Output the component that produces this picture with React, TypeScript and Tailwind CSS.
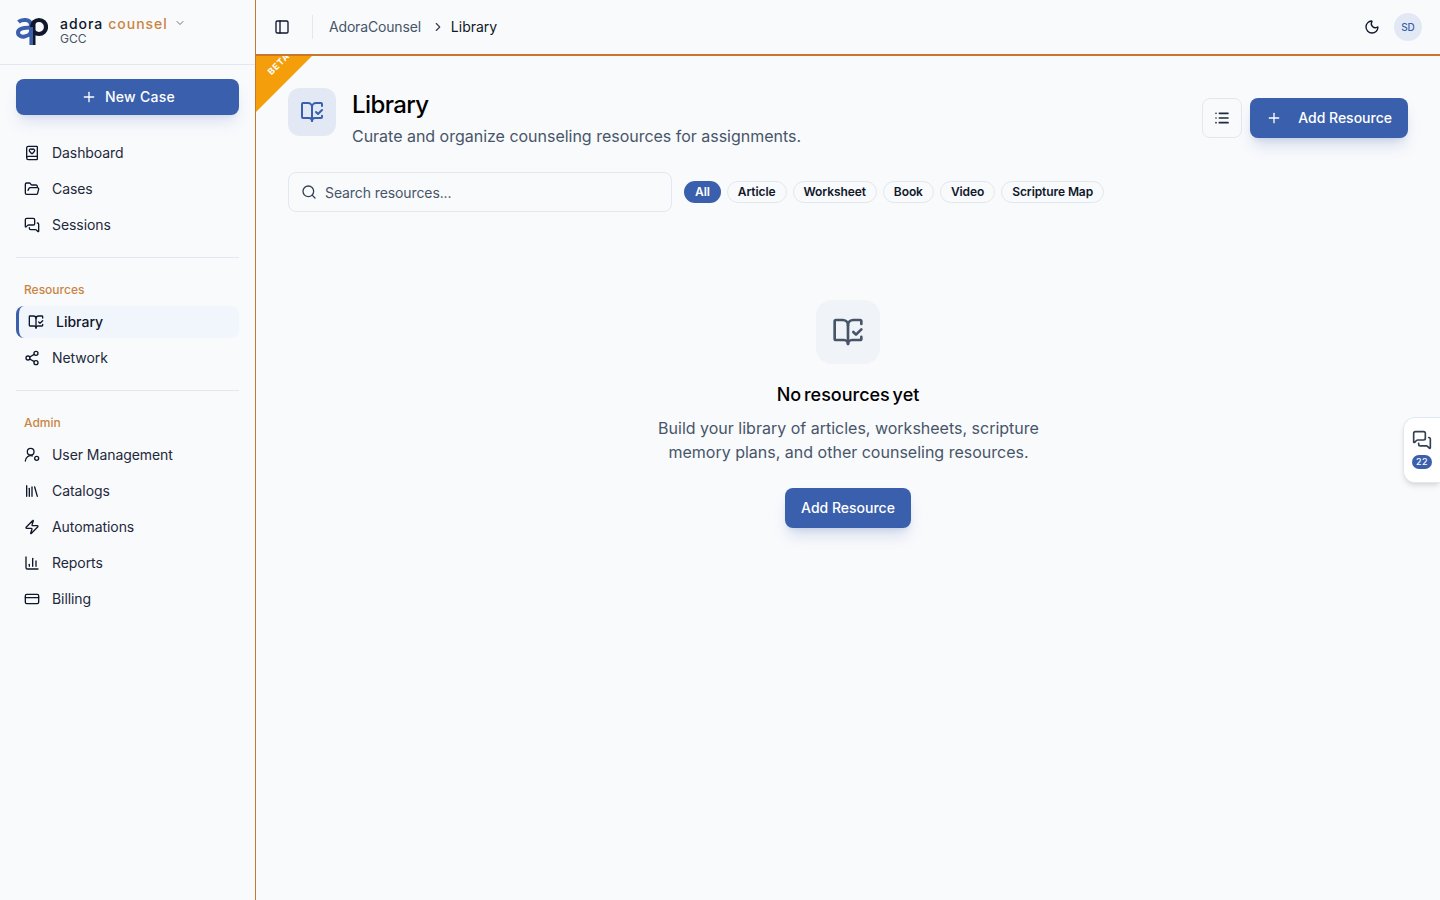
import {
  BookHeart,
  BookOpenCheck,
  ChartColumn,
  ChevronDown,
  ChevronRight,
  CreditCard,
  FolderOpen,
  Library,
  List,
  MessagesSquare,
  Moon,
  PanelLeft,
  Plus,
  Search,
  Share2,
  Zap,
} from "lucide-react"

function UserRing({ className }: { className?: string }) {
  return (
    <svg viewBox="0 0 24 24" fill="none" stroke="currentColor" strokeWidth="2" strokeLinecap="round" strokeLinejoin="round" className={className}>
      <circle cx="10" cy="7" r="5" />
      <path d="M2 21a8 8 0 0 1 10.5-7.6" />
      <circle cx="19" cy="17" r="3" />
    </svg>
  )
}

const mainNav = [
  { label: "Dashboard", icon: BookHeart },
  { label: "Cases", icon: FolderOpen },
  { label: "Sessions", icon: MessagesSquare },
]

const adminNav = [
  { label: "User Management", icon: UserRing },
  { label: "Catalogs", icon: Library },
  { label: "Automations", icon: Zap },
  { label: "Reports", icon: ChartColumn },
  { label: "Billing", icon: CreditCard },
]

const filters = ["Article", "Worksheet", "Book", "Video", "Scripture Map"]

function NavItem({ label, icon: Icon }: { label: string; icon: React.ComponentType<{ className?: string }> }) {
  return (
    <div className="flex h-9 items-center gap-3 px-2 text-sm tracking-[-0.005em] text-[#1e293b]">
      <Icon className="h-4 w-4 shrink-0 text-[#0f172a]" />
      <span>{label}</span>
    </div>
  )
}

function Logo() {
  return (
    <svg width="32" height="30" viewBox="0 0 32 30" className="shrink-0">
      <path d="M2.5 7 C5 4.5 15 3 15 10.5 V22" fill="none" stroke="#3b5fad" strokeWidth="4" />
      <path d="M15 12.5 C9 12.5 2 13 2 17.5 C2 21 6 22 8.5 21.5 C11 21 15 19 15 16" fill="none" stroke="#3b5fad" strokeWidth="4" />
      <circle cx="23" cy="12" r="7" fill="none" stroke="#0f172a" strokeWidth="4.2" />
      <path d="M18.2 5 V30" fill="none" stroke="#0f172a" strokeWidth="2.6" />
      <path d="M15.2 12 V30" fill="none" stroke="#3b5fad" strokeWidth="3.6" />
    </svg>
  )
}

export default function App() {
  return (
    <div className="flex h-[900px] w-[1440px] overflow-hidden bg-[#f9fafc] font-['Inter',sans-serif]">
      {/* Sidebar */}
      <aside className="flex w-[256px] shrink-0 flex-col border-r border-[#c9762f]">
        <div className="flex h-[65px] items-center gap-3 border-b border-[#e2e8f0] px-4 pb-1">
          <Logo />
          <div className="leading-none">
            <div className="flex items-center">
              <span className="text-sm font-medium leading-[15px] tracking-[0.07em] text-[#0f172a]">adora</span>
              <span className="ml-[5px] text-sm font-medium leading-[15px] tracking-[0.07em] text-[#c9853f]">counsel</span>
              <ChevronDown className="ml-[6px] h-3 w-3 text-[#64748b]" />
            </div>
            <div className="mt-px text-xs leading-[13px] text-[#475569]">GCC</div>
          </div>
        </div>
        <div className="flex flex-col px-4 pt-[14px]">
          <button className="flex h-9 items-center justify-center gap-2 rounded-lg bg-[#3a5fac] pl-px text-sm font-medium tracking-[0.02em] text-white shadow-lg shadow-[#3a5fac]/15">
            <Plus className="h-4 w-4" />
            New Case
          </button>
          <nav className="mt-5 flex flex-col">
            {mainNav.map((item) => (
              <NavItem key={item.label} {...item} />
            ))}
          </nav>
          <div className="mt-[14px] border-t border-[#e2e8f0]" />
          <div className="mt-6 px-2 text-xs font-medium leading-4 text-[#c9853f]">Resources</div>
          <div className="mt-2 flex h-8 items-center gap-3 rounded-lg border-l-[3px] border-[#3a5fac] bg-[#f1f6fd] pl-[9px] text-sm font-medium text-[#0f172a]">
            <BookOpenCheck className="h-4 w-4" />
            Library
          </div>
          <div className="mt-0.5">
            <NavItem label="Network" icon={Share2} />
          </div>
          <div className="mt-[14px] border-t border-[#e2e8f0]" />
          <div className="mt-6 px-2 text-xs font-medium leading-4 text-[#c9853f]">Admin</div>
          <nav className="mt-[6px] flex flex-col">
            {adminNav.map((item) => (
              <NavItem key={item.label} {...item} />
            ))}
          </nav>
        </div>
      </aside>

      {/* Main */}
      <div className="relative flex min-w-0 flex-1 flex-col">
        <header className="flex h-[56px] shrink-0 items-center border-b-2 border-[#c9762f] pl-[18px] pr-[18px]">
          <PanelLeft className="h-4 w-4 text-[#0f172a]" />
          <div className="ml-[22px] h-6 border-l border-[#e2e8f0]" />
          <span className="ml-4 text-sm tracking-[-0.012em] text-[#475569]">AdoraCounsel</span>
          <ChevronRight className="ml-[10px] h-3.5 w-3.5 text-[#334155]" />
          <span className="ml-[6px] text-sm text-[#0f172a]">Library</span>
          <Moon className="ml-auto h-4 w-4 text-[#0f172a]" />
          <div className="ml-[14px] flex h-7 w-7 items-center justify-center rounded-full bg-[#e2e9f4] text-[10px] font-medium text-[#3a5fac]">
            SD
          </div>
        </header>

        {/* Beta ribbon */}
        <div className="absolute left-0 top-[56px] h-[56px] w-[56px] bg-[#f59e0b] [clip-path:polygon(0_0,100%_0,0_100%)]">
          <span className="absolute left-[9px] top-[3px] -rotate-45 text-[9px] font-bold leading-[9px] tracking-[0.1em] text-white">
            BETA
          </span>
        </div>

        <main className="flex flex-1 flex-col px-8 pt-8">
          <div className="flex items-start justify-between">
            <div className="flex items-start gap-4">
              <div className="flex h-12 w-12 items-center justify-center rounded-xl bg-[#e2e9f4]">
                <BookOpenCheck className="h-6 w-6 text-[#3a5fac]" />
              </div>
              <div className="mt-px">
                <h1 className="text-2xl font-medium leading-8 tracking-tight text-black">Library</h1>
                <p className="mt-[3px] text-base leading-6 tracking-[-0.001em] text-[#475569]">
                  Curate and organize counseling resources for assignments.
                </p>
              </div>
            </div>
            <div className="mt-2.5 flex items-center gap-2">
              <button className="flex h-10 w-10 items-center justify-center rounded-lg border border-[#e2e8f0]">
                <List className="h-4 w-4 text-[#1e293b]" strokeWidth={2.5} />
              </button>
              <button className="flex h-10 items-center gap-4 rounded-lg bg-[#3a5fac] pl-4 pr-4 text-sm font-medium text-white shadow-lg shadow-[#3a5fac]/20">
                <Plus className="h-4 w-4" />
                Add Resource
              </button>
            </div>
          </div>

          <div className="mt-6 flex items-center gap-3">
            <div className="flex h-10 w-[384px] items-center gap-2 rounded-lg border border-[#e2e8f0] px-3 text-sm tracking-[-0.007em] text-[#475569]">
              <Search className="h-4 w-4 text-[#334155]" />
              <span className="pt-0.5">Search resources...</span>
            </div>
            <div className="flex items-center gap-1.5">
              <span className="flex h-[22px] items-center rounded-full bg-[#3a5fac] px-[11px] text-xs font-semibold tracking-[-0.007em] text-white">All</span>
              {filters.map((f) => (
                <span key={f} className="flex h-[22px] items-center rounded-full border border-[#e2e8f0] px-2.5 text-xs font-semibold tracking-[-0.007em] text-[#0f172a]">
                  {f}
                </span>
              ))}
            </div>
          </div>

          <div className="mt-[88px] flex flex-col items-center">
            <div className="flex h-16 w-16 items-center justify-center rounded-2xl bg-[#f0f3f8]">
              <BookOpenCheck className="h-8 w-8 text-[#475569]" />
            </div>
            <h2 className="mt-[17px] text-lg font-[450] leading-7 tracking-normal text-black [word-spacing:-2px]">No resources yet</h2>
            <p className="ml-px mt-[7px] w-[420px] text-center text-base leading-6 text-[#475569]">
              Build your library of articles, worksheets, scripture memory plans, and other counseling resources.
            </p>
            <button className="mt-6 flex h-10 items-center rounded-lg bg-[#3a5fac] px-4 text-sm font-medium text-white shadow-lg shadow-[#3a5fac]/20">
              Add Resource
            </button>
          </div>
        </main>

        {/* Floating chat tab */}
        <div className="absolute right-0 top-[417px] flex h-[66px] w-[37px] flex-col items-center rounded-l-xl border border-r-0 border-[#e2e8f0] bg-white pt-[12px] shadow-md">
          <MessagesSquare className="h-5 w-5 text-[#334155]" />
          <span className="mt-[5px] flex h-[14px] w-5 items-center justify-center rounded-full bg-[#3a5fac] text-[9px] font-medium tracking-[0.05em] text-white">22</span>
        </div>
      </div>
    </div>
  )
}
